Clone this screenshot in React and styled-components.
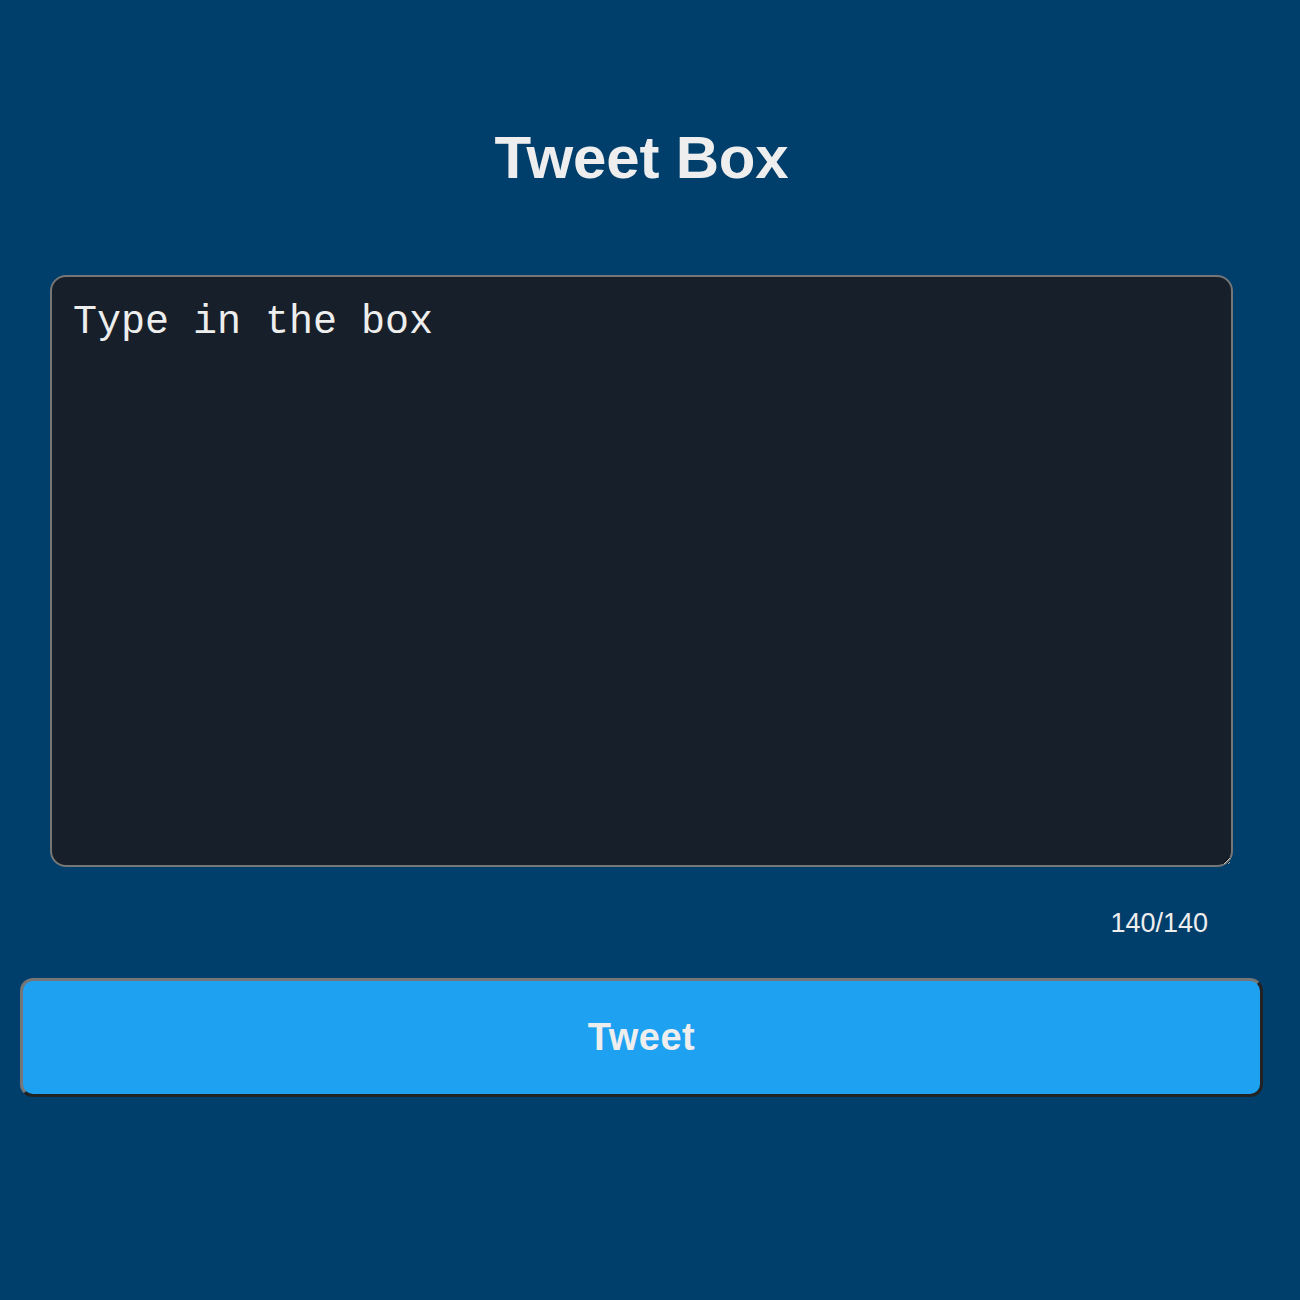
import styled, { createGlobalStyle } from "styled-components";

const PageColor = "#003e6b";
const TextColor = "#eeeeee";

function App() {
  return (
    <Page>
      <GlobalStyle />
      <Title>Tweet Box</Title>
      <TweetInput placeholder="Type in the box" />
      <CounterRow>
        <Counter>140/140</Counter>
      </CounterRow>
      <TweetButton>Tweet</TweetButton>
    </Page>
  );
}

const GlobalStyle = createGlobalStyle`
  body {
    margin: 0;
    background-color: ${PageColor};
  }
`;

const Page = styled.main`
  width: 1283px;
  min-height: 1300px;
  display: flex;
  flex-direction: column;
  align-items: center;
  padding-top: 123px;
  box-sizing: border-box;
`;

const Title = styled.h1`
  margin: 0 0 82px;
  font-family: "Liberation Sans", Arial, sans-serif;
  font-weight: bold;
  font-size: 60px;
  line-height: 70px;
  letter-spacing: -0.2px;
  color: ${TextColor};
`;

const TweetInput = styled.textarea`
  width: 1183px;
  height: 592px;
  box-sizing: border-box;
  padding: 23px 21px 20px;
  background-color: #17202a;
  border: 2px solid #767676;
  border-radius: 16px;
  font-family: "Liberation Mono", "Courier New", monospace;
  font-size: 40px;
  line-height: 46px;
  color: ${TextColor};
  outline: none;
  &::placeholder {
    color: ${TextColor};
    opacity: 1;
  }
`;

const CounterRow = styled.div`
  width: 1183px;
  display: flex;
  justify-content: flex-end;
  padding-right: 25px;
  box-sizing: border-box;
  margin-top: 39px;
`;

const Counter = styled.span`
  font-family: "Liberation Sans", Arial, sans-serif;
  font-size: 27px;
  line-height: 34px;
  color: ${TextColor};
`;

const TweetButton = styled.button`
  margin-top: 38px;
  width: 1243px;
  height: 119px;
  background-color: #1fa1f2;
  border: 3px solid;
  border-color: #767676 #222222 #222222 #767676;
  border-radius: 13px;
  font-family: "Liberation Sans", Arial, sans-serif;
  font-weight: bold;
  font-size: 38px;
  letter-spacing: 0.5px;
  color: ${TextColor};
  cursor: pointer;
`;

export default App;
